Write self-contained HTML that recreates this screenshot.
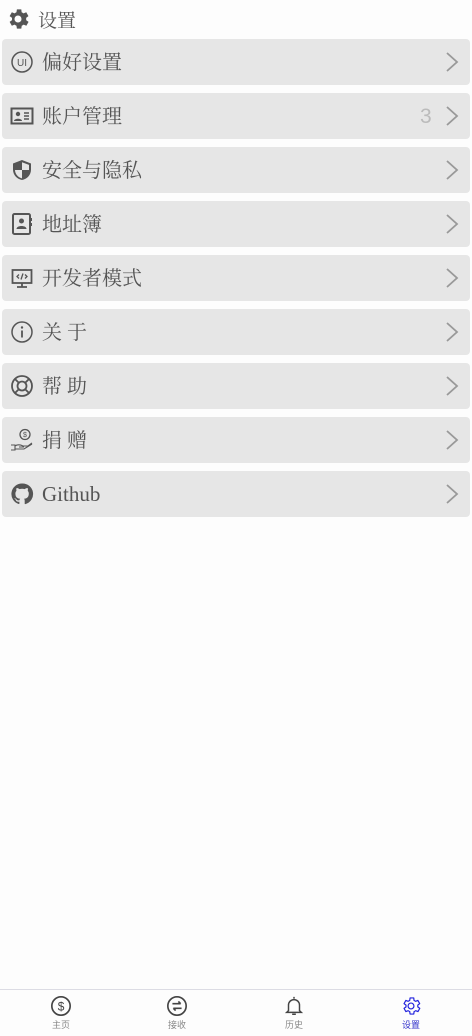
<!DOCTYPE html>
<html><head><meta charset="utf-8"><style>
*{margin:0;padding:0;box-sizing:border-box}
body{width:472px;height:1036px;background:#fdfdfd;position:relative;overflow:hidden;font-family:"Liberation Serif","Noto Serif CJK SC",serif;color:#555}
.hdr{position:absolute;left:7px;top:7px;height:24px;display:flex;align-items:center;font-size:19px;color:#555}
.hdr svg{margin-right:9px}
.row{position:absolute;left:2px;width:468px;height:46px;background:#e6e6e6;border-radius:4px}
.row .ic{position:absolute;left:8px;top:11px;width:24px;height:24px}
.row .t{position:absolute;left:40px;top:11px;font-size:20px;line-height:26px;color:#555}
.row .ch{position:absolute;left:443px;top:13px}
.row .n{position:absolute;left:418px;top:12px;font-size:21px;color:#bbb;font-family:"Liberation Sans",sans-serif}
.bar{position:absolute;left:0;top:989px;width:472px;height:47px;border-top:1px solid #dcdce4}
.tab{position:absolute;top:5px;width:60px;margin-left:-30px;text-align:center;font-family:"Liberation Sans","Noto Sans CJK SC",sans-serif;font-size:9px;color:#888}
.tab svg{display:block;margin:0 auto 1px}
</style></head><body>
<div class="hdr"><svg width="22" height="22" viewBox="2 2 20 20"><path fill="#555" d="M19.4 13a7.5 7.5 0 000-2l2.1-1.6-2-3.5-2.5 1a7.4 7.4 0 00-1.7-1L15 3.2h-4l-.4 2.7a7.4 7.4 0 00-1.7 1l-2.5-1-2 3.5L6.6 11a7.5 7.5 0 000 2l-2.2 1.6 2 3.5 2.5-1a7.4 7.4 0 001.7 1l.4 2.7h4l.4-2.7a7.4 7.4 0 001.7-1l2.5 1 2-3.5zM12 15.2a3.2 3.2 0 110-6.4 3.2 3.2 0 010 6.4z"/></svg>设置</div>

<div class="row" style="top:39px"><svg class="ic" viewBox="0 0 24 24"><circle cx="12" cy="12" r="10" fill="none" stroke="#555" stroke-width="1.5"/><text x="12" y="16" font-size="10" text-anchor="middle" fill="#555" font-family="Liberation Sans">UI</text></svg><span class="t">偏好设置</span><svg class="ch" width="14" height="20" viewBox="0 0 14 20"><path d="M2 1l10 9-10 9" fill="none" stroke="#999" stroke-width="1.8"/></svg></div>

<div class="row" style="top:93px"><svg class="ic" viewBox="0 0 24 24"><rect x="1.5" y="4.5" width="21" height="15" fill="none" stroke="#555" stroke-width="2"/><circle cx="8" cy="10" r="2.2" fill="#555"/><path d="M4 17c0-3 8-3 8 0z" fill="#555"/><path d="M14 9h5M14 12h5M14 15h5" stroke="#555" stroke-width="1.5"/></svg><span class="t">账户管理</span><span class="n">3</span><svg class="ch" width="14" height="20" viewBox="0 0 14 20"><path d="M2 1l10 9-10 9" fill="none" stroke="#999" stroke-width="1.8"/></svg></div>

<div class="row" style="top:147px"><svg class="ic" viewBox="0 0 24 24"><defs><clipPath id="sh"><path d="M12 4.2l7 2.7v4.9c0 4.3-3 7.6-7 8.6-4-1-7-4.3-7-8.6V6.9z"/></clipPath></defs><path d="M12 2l9 3.5v6c0 5.5-4 9.5-9 10.5-5-1-9-5-9-10.5v-6z" fill="#555"/><g clip-path="url(#sh)" fill="#e6e6e6"><rect x="12" y="0" width="10" height="12"/><rect x="2" y="12" width="10" height="12"/></g></svg><span class="t">安全与隐私</span><svg class="ch" width="14" height="20" viewBox="0 0 14 20"><path d="M2 1l10 9-10 9" fill="none" stroke="#999" stroke-width="1.8"/></svg></div>

<div class="row" style="top:201px"><svg class="ic" viewBox="0 0 24 24"><rect x="3" y="2" width="17" height="20" rx="1.5" fill="none" stroke="#555" stroke-width="2"/><circle cx="11.5" cy="9" r="2.5" fill="#555"/><path d="M6.5 17c0-4 10-4 10 0z" fill="#555"/><path d="M21 6v3M21 11v3" stroke="#555" stroke-width="2"/></svg><span class="t">地址簿</span><svg class="ch" width="14" height="20" viewBox="0 0 14 20"><path d="M2 1l10 9-10 9" fill="none" stroke="#999" stroke-width="1.8"/></svg></div>

<div class="row" style="top:255px"><svg class="ic" viewBox="0 0 24 24"><rect x="2.5" y="4" width="19" height="13" fill="none" stroke="#555" stroke-width="1.8"/><path d="M7 21h10M12 17v4" stroke="#555" stroke-width="1.8"/><path d="M9 8.5l-2 2 2 2M15 8.5l2 2-2 2M13 7.5l-2 6" fill="none" stroke="#555" stroke-width="1.3"/></svg><span class="t">开发者模式</span><svg class="ch" width="14" height="20" viewBox="0 0 14 20"><path d="M2 1l10 9-10 9" fill="none" stroke="#999" stroke-width="1.8"/></svg></div>

<div class="row" style="top:309px"><svg class="ic" viewBox="0 0 24 24"><circle cx="12" cy="12" r="10" fill="none" stroke="#555" stroke-width="1.5"/><circle cx="12" cy="7.5" r="1.2" fill="#555"/><path d="M12 10.5v7" stroke="#555" stroke-width="1.8"/></svg><span class="t">关 于</span><svg class="ch" width="14" height="20" viewBox="0 0 14 20"><path d="M2 1l10 9-10 9" fill="none" stroke="#999" stroke-width="1.8"/></svg></div>

<div class="row" style="top:363px"><svg class="ic" viewBox="0 0 24 24"><circle cx="12" cy="12" r="10" fill="none" stroke="#555" stroke-width="1.8"/><circle cx="12" cy="12" r="4.5" fill="none" stroke="#555" stroke-width="1.8"/><path d="M5 5l3.8 3.8M19 5l-3.8 3.8M5 19l3.8-3.8M19 19l-3.8-3.8" stroke="#555" stroke-width="1.8"/></svg><span class="t">帮 助</span><svg class="ch" width="14" height="20" viewBox="0 0 14 20"><path d="M2 1l10 9-10 9" fill="none" stroke="#999" stroke-width="1.8"/></svg></div>

<div class="row" style="top:417px"><svg class="ic" viewBox="0 0 24 24"><circle cx="15" cy="6.5" r="5" fill="none" stroke="#555" stroke-width="1.3"/><text x="15" y="9" font-size="7" text-anchor="middle" fill="#555" font-family="Liberation Sans">$</text><path d="M1 17h4v5H1M5 18c3-2 6-1 8 0h5l4-3M5 21h9l8-5M9 19h5" fill="none" stroke="#555" stroke-width="1.1"/></svg><span class="t">捐 赠</span><svg class="ch" width="14" height="20" viewBox="0 0 14 20"><path d="M2 1l10 9-10 9" fill="none" stroke="#999" stroke-width="1.8"/></svg></div>

<div class="row" style="top:471px"><svg class="ic" viewBox="0 0 24 24"><path fill="#555" d="M12 1.5a10.5 10.5 0 00-3.3 20.5c.5.1.7-.2.7-.5v-1.9c-2.9.6-3.5-1.3-3.5-1.3-.5-1.2-1.2-1.5-1.2-1.5-1-.7.1-.6.1-.6 1 .1 1.6 1.1 1.6 1.1.9 1.6 2.5 1.1 3.1.9.1-.7.4-1.1.7-1.4-2.300-.3-4.8-1.2-4.8-5.2 0-1.1.4-2.1 1.1-2.8-.1-.3-.5-1.3.1-2.8 0 0 .9-.3 2.9 1.1a10 10 0 015.2 0c2-1.4 2.9-1.1 2.9-1.1.6 1.5.2 2.5.1 2.8.7.7 1.1 1.7 1.1 2.8 0 4-2.5 4.9-4.8 5.2.4.3.7 1 .7 1.9v2.9c0 .3.2.6.7.5A10.5 10.5 0 0012 1.5z"/></svg><span class="t" style="font-family:'Liberation Serif',serif;top:10px;font-size:21px">Github</span><svg class="ch" width="14" height="20" viewBox="0 0 14 20"><path d="M2 1l10 9-10 9" fill="none" stroke="#999" stroke-width="1.8"/></svg></div>

<div class="bar">
<div class="tab" style="left:61px"><svg width="22" height="22" viewBox="0 0 24 24"><circle cx="12" cy="12" r="10" fill="none" stroke="#444" stroke-width="1.8"/><text x="12" y="17" font-size="13" text-anchor="middle" fill="#444" font-family="Liberation Sans">$</text></svg>主页</div>
<div class="tab" style="left:177px"><svg width="22" height="22" viewBox="0 0 24 24"><circle cx="12" cy="12" r="10" fill="none" stroke="#444" stroke-width="1.8"/><path d="M7 9.5h9M13.5 7l2.5 2.5M17 14.5H8M10.5 17L8 14.5" fill="none" stroke="#444" stroke-width="1.8"/></svg>接收</div>
<div class="tab" style="left:294px"><svg width="22" height="22" viewBox="0 0 24 24"><path d="M12 2v2M6 17V11a6 6 0 0112 0v6l2 2H4zM10 21h4" fill="none" stroke="#444" stroke-width="1.6"/></svg>历史</div>
<div class="tab" style="left:411px;color:#3333cc"><svg width="22" height="22" viewBox="0 0 24 24"><path d="M19.4 13a7.5 7.5 0 000-2l2.1-1.6-2-3.5-2.5 1a7.4 7.4 0 00-1.7-1L15 3.2h-4l-.4 2.7a7.4 7.4 0 00-1.7 1l-2.5-1-2 3.5L6.6 11a7.5 7.5 0 000 2l-2.2 1.6 2 3.5 2.5-1a7.4 7.4 0 001.7 1l.4 2.7h4l.4-2.7a7.4 7.4 0 001.7-1l2.5 1 2-3.5z" fill="none" stroke="#2222dd" stroke-width="1.3" stroke-linejoin="round"/><circle cx="12" cy="12" r="3.2" fill="none" stroke="#2222dd" stroke-width="1.3"/></svg>设置</div>
</div>
</body></html>
